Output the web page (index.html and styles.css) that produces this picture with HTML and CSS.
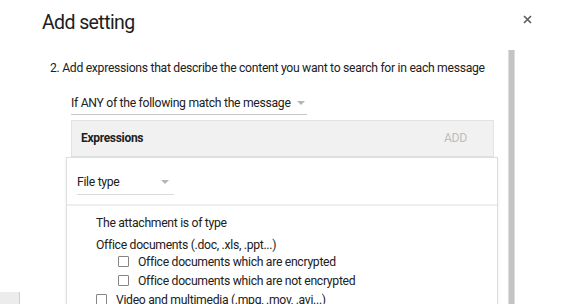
FILE: index.html
```html
<!DOCTYPE html>
<html lang="en">
<head>
    <meta charset="UTF-8">
    <title>Add setting</title>
    <link rel="stylesheet" href="styles.css">
</head>
<body>
    <div class="backdrop-tab"></div>
    <div class="dialog">
        <div class="dialog-header">
            <h1>Add setting</h1>
            <button class="close-btn" aria-label="Close">
                <svg width="9" height="9" viewBox="0 0 9 9"><path d="M1 1L8 8M8 1L1 8" stroke="#5f5f5f" stroke-width="1.7"/></svg>
            </button>
        </div>
        <div class="dialog-body">
            <div class="content">
                <p class="step">2. Add expressions that describe the content you want to search for in each message</p>
                <div class="select match-select">
                    <span>If ANY of the following match the message</span>
                    <span class="caret"></span>
                </div>
                <div class="expr-head">
                    <span class="expr-title">Expressions</span>
                    <span class="expr-add">ADD</span>
                </div>
                <div class="expr-card">
                    <div class="card-top">
                        <div class="select type-select">
                            <span>File type</span>
                            <span class="caret"></span>
                        </div>
                    </div>
                    <div class="card-body">
                        <div class="line">The attachment is of type</div>
                        <div class="line group">Office documents (.doc, .xls, .ppt...)</div>
                        <label class="check sub"><span class="box"></span>Office documents which are encrypted</label>
                        <label class="check sub"><span class="box"></span>Office documents which are not encrypted</label>
                        <label class="check"><span class="box"></span>Video and multimedia (.mpg, .mov, .avi...)</label>
                    </div>
                </div>
            </div>
            <div class="scrollbar"></div>
        </div>
    </div>
</body>
</html>
```
FILE: styles.css
```css
body {
    margin: 0;
    background: #fff;
    font-family: Roboto, 'Noto Sans', Arial, sans-serif;
    color: #212121;
    height: 304px;
    overflow: hidden;
    white-space: nowrap;
    letter-spacing: -0.3px;
}
.dialog {
    padding-left: 42px;
}
.dialog-header {
    display: flex;
    justify-content: space-between;
    align-items: flex-start;
    height: 50px;
    padding-right: 48px;
}
h1 {
    margin: 10px 0 0 0;
    font-size: 19.5px;
    font-weight: 400;
    line-height: 26px;
    letter-spacing: -0.6px;
    color: #202020;
}
.close-btn {
    background: none;
    border: none;
    padding: 0;
    margin-top: 15px;
    width: 9px;
    height: 9px;
    line-height: 0;
    cursor: pointer;
}
.dialog-body {
    display: flex;
    align-items: flex-start;
}
.content {
    width: 447px;
    margin-left: 8px;
    padding-top: 9px;
}
.scrollbar {
    width: 5px;
    height: 260px;
    margin-left: 11px;
    background: #c4c4c4;
    border-left: 1px solid #dcdcdc;
    border-right: 1px solid #dcdcdc;
}
.step {
    margin: 0;
    font-size: 12.2px;
    line-height: 18px;
}
.select {
    display: flex;
    align-items: center;
    justify-content: space-between;
    border-bottom: 1px solid #c8c8c8;
    font-size: 12.2px;
}
.caret {
    width: 0;
    height: 0;
    border-left: 4px solid transparent;
    border-right: 4px solid transparent;
    border-top: 4px solid #b5b5b5;
}
.match-select {
    width: 236px;
    margin: 14px 0 0 21px;
    height: 23px;
    justify-content: flex-start;
    gap: 6px;
}
.expr-head {
    display: flex;
    justify-content: space-between;
    align-items: center;
    height: 37px;
    margin: 5px 0 0 21px;
    padding: 0 26px 1px 9px;
    box-sizing: border-box;
    background: #f1f1f1;
    border: 1px solid #e3e3e3;
    width: 423px;
}
.expr-title {
    font-size: 12px;
    font-weight: 700;
}
.expr-add {
    font-size: 12.2px;
    color: #bdbdbd;
}
.expr-card {
    width: 430px;
    margin: 0 0 0 16px;
    background: #fff;
    border: 1px solid #dedede;
    box-shadow: 0 1px 3px rgba(0,0,0,0.08);
    padding-bottom: 20px;
}
.card-top {
    padding: 12px 0 9px 10px;
    border-bottom: 2px solid #eeeeee;
}
.type-select {
    width: 97px;
    height: 25px;
    padding-right: 5px;
    box-sizing: border-box;
    border-bottom-color: #dadada;
}
.card-body {
    padding: 8px 0 0 29px;
    font-size: 12.2px;
}
.line {
    line-height: 19px;
    margin-bottom: 3px;
}
.line.group {
    line-height: 14px;
    margin: 5px 0 0 0;
}
.check {
    display: flex;
    align-items: center;
    gap: 9px;
    height: 19px;
}
.check.sub {
    padding-left: 22px;
}
.box {
    width: 9px;
    height: 9px;
    border: 1.5px solid #858585;
    border-radius: 1px;
}
/* fragment of the page behind the dialog, peeking out at the bottom left */
.backdrop-tab {
    position: absolute;
    left: 0;
    top: 292px;
    width: 19px;
    height: 12px;
    background: #ececec;
    border-right: 1px solid #cfcfcf;
}
```
